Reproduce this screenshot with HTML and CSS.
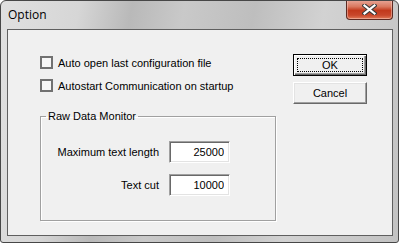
FILE: index.html
```html
<html>
	<head>
		<meta name="viewport" content="width=device-width, initial-scale=1">
		<link rel="stylesheet" href="styles.css">
	</head>
	<body>
		<div class="window">
			<div class="titlebar">
				<span class="title">Option</span>
				<button class="close" title="Close">
					<svg width="15" height="11" viewBox="0 0 15 11">
						<path d="M2.5 1.5 L12.5 9.5 M12.5 1.5 L2.5 9.5" stroke="#3b3b3b" stroke-width="4.2" stroke-linecap="square" fill="none"/>
						<path d="M2.5 1.5 L12.5 9.5 M12.5 1.5 L2.5 9.5" stroke="#fff" stroke-width="2.2" stroke-linecap="square" fill="none"/>
					</svg>
				</button>
			</div>
			<form class="client">
				<div class="options">
					<label class="check"><span class="box"></span>Auto open last configuration file</label>
					<label class="check"><span class="box"></span>Autostart Communication on startup</label>

					<fieldset class="group">
						<legend>Raw Data Monitor</legend>
						<div class="fields">
							<label for="txtMaxLength">Maximum text length</label>
							<input type="text" id="txtMaxLength" value="25000" />
							<label for="txtCut">Text cut</label>
							<input type="text" id="txtCut" value="10000" />
						</div>
					</fieldset>
				</div>
				<div class="actions">
					<button class="btn default"><span>OK</span></button>
					<button class="btn">Cancel</button>
				</div>
			</form>
		</div>
	</body>
</html>
```

FILE: styles.css
```css
* {
	box-sizing: border-box;
	font-family: "Liberation Sans", Arial, sans-serif;
}

body
{
	margin: 0;
	background: #fff;
}

.window
{
	width: 399px;
	height: 243px;
	border: 1px solid #474747;
	border-radius: 6px 6px 3px 3px;
	background: linear-gradient(100deg, #e0e0e0 0%, #d6d6d6 18%, #b9b9b9 30%, #c9c9c9 42%, #bebebe 58%, #d2d2d2 74%, #c2c2c2 100%);
	display: flex;
	flex-direction: column;
	overflow: hidden;
}

.titlebar
{
	height: 28px;
	display: flex;
	align-items: flex-start;
	padding-left: 7px;
}

.title
{
	font-family: "Open Sans", sans-serif;
	font-size: 12px;
	line-height: 16px;
	margin-top: 6px;
	color: #000;
}

.close
{
	margin-left: auto;
	margin-right: 5px;
	margin-top: -1px;
	width: 47px;
	height: 20px;
	padding: 0;
	border: 1px solid #5c2a22;
	border-top: 0;
	border-radius: 0 0 4px 4px;
	background: linear-gradient(#e9a89a 0%, #d9785f 35%, #c2391c 55%, #c8472b 80%, #e07a58 100%);
	box-shadow: inset 0 0 0 1px rgba(255, 220, 210, 0.45);
	display: flex;
	align-items: center;
	justify-content: center;
}

.client
{
	margin: 0 5px 6px 6px;
	flex: 1;
	border: 1px solid #5f5f5f;
	background: #f0f0f0;
	display: flex;
	font-size: 11px;
	color: #000;
}

.options
{
	padding: 26px 0 0 32px;
	width: 268px;
}

.check
{
	display: flex;
	align-items: center;
	height: 13px;
	margin-bottom: 10px;
	white-space: nowrap;
}

.box
{
	width: 13px;
	height: 13px;
	border: 2px solid #717171;
	background: #f7f7f7;
	margin-right: 5px;
	flex-shrink: 0;
}

.group
{
	margin: 18px 0 0 0;
	width: 236px;
	padding: 18px 0 24px 0;
	border: 1px solid #a0a0a0;
	box-shadow: inset 1px 1px 0 #fff, 1px 1px 0 #fff;
}

.group legend
{
	margin-left: 5px;
	padding: 0 2px;
	font-size: 11px;
	line-height: 13px;
}

.fields
{
	display: grid;
	grid-template-columns: 100px 61px;
	column-gap: 10px;
	row-gap: 11px;
	align-items: center;
	margin-left: 18px;
}

.fields label
{
	justify-self: end;
	white-space: nowrap;
}

.fields input
{
	width: 61px;
	height: 22px;
	border: 1px solid;
	border-color: #a0a0a0 #fff #fff #a0a0a0;
	box-shadow: inset 1px 1px 0 #696969, inset -1px -1px 0 #e3e3e3;
	background: #fff;
	text-align: right;
	padding: 0 5px 0 0;
	font-size: 11px;
	color: #000;
	outline: none;
}

.actions
{
	padding-top: 24px;
	margin-left: 17px;
	display: flex;
	flex-direction: column;
	gap: 6px;
}

.btn
{
	width: 74px;
	height: 22px;
	padding: 0;
	background: #f0f0f0;
	border: 1px solid;
	border-color: #fff #696969 #696969 #fff;
	box-shadow: inset -1px -1px 0 #a0a0a0, inset 1px 1px 0 #e3e3e3;
	font-size: 11px;
	color: #000;
}

.btn.default
{
	border: 1px solid #000;
	box-shadow: inset 1px 1px 0 #fff, inset -1px -1px 0 #696969, inset -2px -2px 0 #a0a0a0;
	padding: 3px;
}

.btn.default span
{
	display: flex;
	align-items: center;
	justify-content: center;
	height: 100%;
	border: 1px dotted #000;
}
```
